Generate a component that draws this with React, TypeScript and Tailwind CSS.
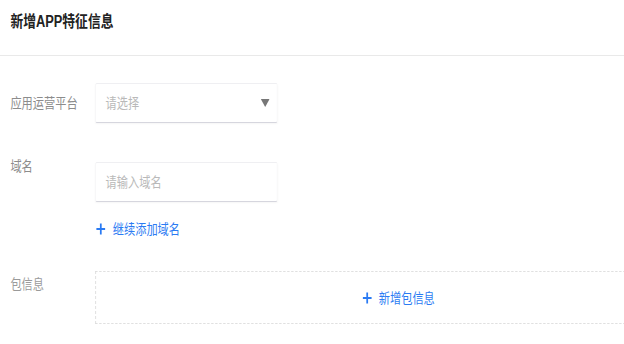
import React from 'react';

const font = { fontFamily: '"Liberation Sans", "Noto Sans CJK SC", sans-serif' };

function PlusIcon() {
  return (
    <svg width="12" height="12" viewBox="0 0 12 12" className="shrink-0">
      <path d="M6 0.5v11M0.5 6h11" stroke="#2b7bf3" strokeWidth="2.2" fill="none" />
    </svg>
  );
}

export default function App() {
  return (
    <div className="w-[624px] h-[344px] overflow-hidden bg-white" style={font}>
      {/* screenshot is squeezed horizontally, so the page is drawn wider and scaled */}
      <div className="w-[890px] origin-top-left scale-x-[0.8]">
        <div className="h-[56px] border-b border-[#e9e9e9] pt-[12px] px-[13px]">
          <h1 className="text-[16px] leading-[20px] font-bold text-[#222]">新增APP特征信息</h1>
        </div>

        <div className="px-[13px]">
          {/* platform */}
          <div className="mt-[27px] flex items-center">
            <div className="w-[106px] text-[14px] leading-[20px] text-[#8c8c8c]">应用运营平台</div>
            <div className="w-[228px] h-[40px] flex items-center justify-between pl-[12px] pr-[9px] border border-[#efeff2] border-b-[#d6d6de] rounded-[2px] shadow-[0_1px_2px_rgba(0,0,0,0.04)]">
              <span className="text-[14px] text-[#b9b9b9]">请选择</span>
              <svg width="11" height="8" viewBox="0 0 11 8">
                <polygon points="0,0 11,0 5.5,8" fill="#777" />
              </svg>
            </div>
          </div>

          {/* domain */}
          <div className="mt-[33px] flex items-start">
            <div className="w-[106px] text-[14px] leading-[20px] text-[#8c8c8c]">域名</div>
            <div className="mt-[6px] w-[228px] h-[40px] flex items-center pl-[12px] border border-[#efeff2] border-b-[#d6d6de] rounded-[2px] shadow-[0_1px_2px_rgba(0,0,0,0.04)]">
              <span className="text-[14px] text-[#b9b9b9]">请输入域名</span>
            </div>
          </div>

          <div className="mt-[17px] ml-[107px] flex items-center gap-[9px] h-[20px]">
            <PlusIcon />
            <span className="text-[14px] leading-[20px] text-[#2b7bf3]">继续添加域名</span>
          </div>

          {/* package */}
          <div className="mt-[32px] flex items-start">
            <div className="mt-[3px] w-[106px] text-[14px] leading-[20px] text-[#9a9a9a]">包信息</div>
            <div className="flex-1 h-[53px] flex items-center justify-center gap-[9px] border border-dashed border-[#dcdcdc]">
              <PlusIcon />
              <span className="text-[14px] leading-[20px] text-[#2b7bf3]">新增包信息</span>
            </div>
          </div>
        </div>
      </div>
    </div>
  );
}
